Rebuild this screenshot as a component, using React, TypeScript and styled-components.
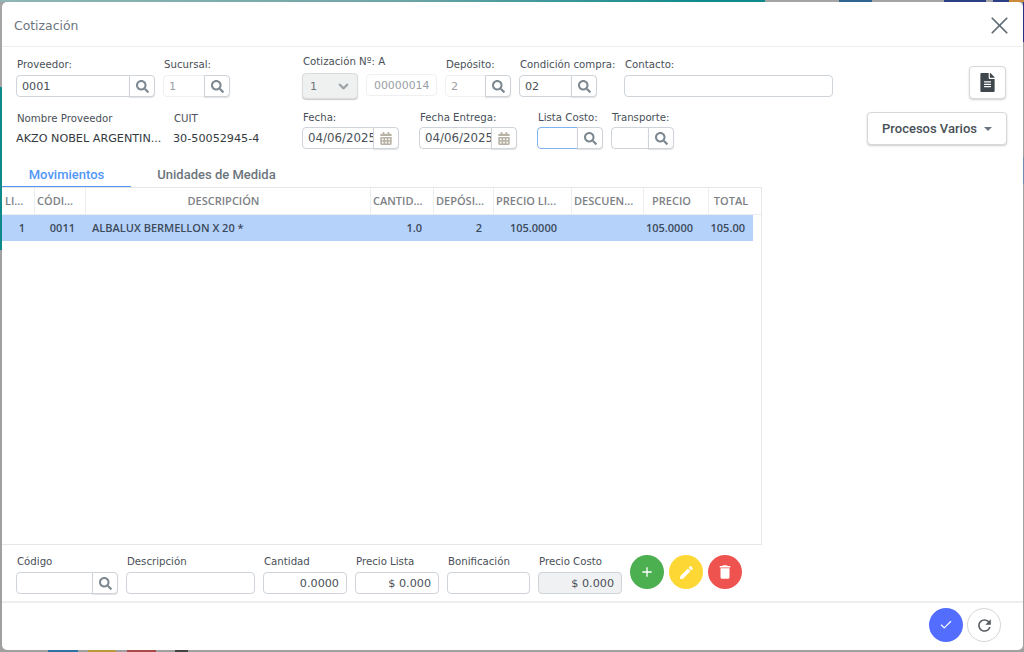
import React from 'react';
import styled, { createGlobalStyle } from 'styled-components';
import { ChevronDown, X, Check } from 'lucide-react';
import { FaSearch, FaCalendarAlt, FaFileAlt } from 'react-icons/fa';
import { MdAdd, MdEdit, MdDelete, MdRefresh } from 'react-icons/md';

const GlobalStyle = createGlobalStyle`
  html, body {
    margin: 0;
    padding: 0;
    width: 1024px;
    height: 652px;
    overflow: hidden;
    font-family: "DejaVu Sans", sans-serif;
  }
  * { box-sizing: border-box; }
`;

// the blurred page behind the dialog only shows along its edges
const Backdrop = styled.div`
  width: 1024px;
  height: 652px;
  padding: 2px 1px 2px 2px;
  background:
    linear-gradient(90deg, #8fb5b5 0, #6fa5a6 400px, #0f8a8c 700px, #0f8a8c 765px, #a5a5a5 765px, #a5a5a5 839px, #2f6690 839px, #2f6690 872px, #a5a5a5 872px, #a5a5a5 944px, #2c3f85 944px, #2c3f85 986px, #a5a5a5 986px, #a5a5a5 993px, #2c3f85 993px, #2c3f85 1009px, #c98a3a 1009px) top / 100% 2px no-repeat,
    linear-gradient(90deg, #a0a0a0 48px, #2f72a8 48px, #2f72a8 78px, #a0a0a0 78px, #a0a0a0 88px, #b89a3c 88px, #b89a3c 116px, #a0a0a0 116px, #a0a0a0 127px, #a84a48 127px, #a84a48 156px, #a0a0a0 156px, #a0a0a0 175px, #444 175px, #444 188px, #a0a0a0 188px) bottom / 100% 2px no-repeat,
    linear-gradient(180deg, #a5a5a5 87px, #0f8a8c 87px, #0f8a8c 250px, #a0a0a0 250px) left / 2px 100% no-repeat,
    linear-gradient(180deg, #2c3085 42px, #a0a0a0 42px, #a0a0a0 157px, #6f8fb0 157px, #6f8fb0 184px, #a0a0a0 184px) right / 1px 100% no-repeat,
    #a0a0a0;
`;

const Modal = styled.div`
  width: 100%;
  height: 100%;
  background: #fff;
  border-radius: 5px;
  display: flex;
  flex-direction: column;
`;

const Header = styled.div`
  height: 45px;
  flex: none;
  display: flex;
  align-items: center;
  justify-content: space-between;
  padding: 3px 9px 0 12px;
  border-bottom: 1px solid #eceeef;
`;

const Title = styled.div`
  font-size: 12.4px;
  color: #6c757d;
`;

const CloseIcon = styled(X)`
  width: 29px;
  height: 29px;
  stroke-width: 1.4;
  color: #5f6b73;
`;

const Form = styled.div`
  height: 111px;
  flex: none;
  display: flex;
  justify-content: space-between;
  padding: 0 16px 0 14px;
`;

const Rows = styled.div`
  display: flex;
  flex-direction: column;
`;

const Row = styled.div`
  display: flex;
  height: 48px;
  &:first-child { height: 63px; padding-top: 10px; }
`;

const Field = styled.div<{ $w: number; $gap?: number }>`
  width: ${(p) => p.$w}px;
  margin-left: ${(p) => p.$gap ?? 0}px;
  flex: none;
  display: flex;
  flex-direction: column;
`;

const RaisedField = styled(Field)`
  margin-top: -2px;
`;

const Label = styled.label<{ $h?: number }>`
  height: ${(p) => p.$h ?? 18}px;
  font-size: 10.2px;
  line-height: 16px;
  padding-left: 1px;
  color: #495057;
  white-space: nowrap;
`;

const RaisedLabel = styled(Label)`
  line-height: 14px;
`;

const Group = styled.div`
  display: flex;
  height: 22px;
`;

const Input = styled.div<{ $muted?: boolean; $focus?: boolean; $right?: boolean; $grey?: boolean; $joined?: boolean }>`
  flex: 1;
  min-width: 0;
  height: 22px;
  padding: 0 ${(p) => (p.$right ? 7 : 5)}px;
  border: 1px solid ${(p) => (p.$focus ? '#80b4f0' : p.$muted ? '#eef0f1' : '#ced4da')};
  border-radius: ${(p) => (p.$joined ? '4px 0 0 4px' : '4px')};
  background: ${(p) => (p.$grey ? '#f0f1f2' : '#fff')};
  font-size: 11.2px;
  line-height: 21px;
  color: ${(p) => (p.$muted ? '#9aa0a6' : '#495057')};
  text-align: ${(p) => (p.$right ? 'right' : 'left')};
  white-space: nowrap;
  overflow: hidden;
`;

const DateInput = styled(Input)`
  font-size: 11.8px;
`;

const AddonButton = styled.div`
  width: 26px;
  height: 22px;
  flex: none;
  display: flex;
  align-items: center;
  justify-content: center;
  margin-left: -1px;
  background: #fff;
  border: 1px solid #ced4da;
  border-radius: 0 4px 4px 0;
  box-shadow: 0 1px 1px rgba(0, 0, 0, 0.12);
`;

const SearchIcon = styled(FaSearch)`
  width: 13px;
  height: 13px;
  color: #7d8890;
`;

const CalendarIcon = styled(FaCalendarAlt)`
  width: 12px;
  height: 13px;
  color: #b8b2a5;
`;

const SelectBox = styled.div`
  width: 56px;
  height: 26px;
  padding: 0 6px 0 7px;
  display: flex;
  align-items: center;
  justify-content: space-between;
  background: #eff0f0;
  border: 1px solid #d9dbdc;
  border-radius: 4px;
  box-shadow: 0 1px 1px rgba(0, 0, 0, 0.2);
  font-size: 11.2px;
  color: #6c757d;
`;

const SelectArrow = styled(ChevronDown)`
  width: 15px;
  height: 15px;
  stroke-width: 3.4;
  color: #a0a5a9;
`;

const NumberBox = styled(Input)`
  flex: none;
  width: 71px;
  margin-left: 8px;
  margin-top: 1px;
  padding: 0 7px;
  font-size: 10.9px;
`;

const NameLabel = styled.div`
  height: 16px;
  padding-top: 2px;
  padding-left: 1px;
  font-size: 10.2px;
  line-height: 14px;
  color: #495057;
  white-space: nowrap;
`;

const NameValue = styled.div`
  margin-top: 5px;
  font-size: 11.2px;
  line-height: 16px;
  color: #343a40;
  white-space: nowrap;
`;

const Side = styled.div`
  display: flex;
  flex-direction: column;
  align-items: flex-end;
  padding-top: 19px;
`;

const DocButton = styled.div`
  width: 37px;
  height: 33px;
  margin-right: 1px;
  display: flex;
  align-items: center;
  justify-content: center;
  background: #fff;
  border: 1px solid #d6d8da;
  border-radius: 4px;
  box-shadow: 0 1px 2px rgba(0, 0, 0, 0.18);
  color: #3f464c;
`;

const Dropdown = styled.div`
  width: 140px;
  height: 33px;
  margin-top: 13px;
  display: flex;
  align-items: center;
  justify-content: center;
  gap: 7px;
  background: #fff;
  border: 1px solid #d6d8da;
  border-radius: 4px;
  box-shadow: 0 1px 2px rgba(0, 0, 0, 0.2);
  font-family: Roboto, sans-serif;
  font-weight: 500;
  font-size: 13px;
  color: #495057;
`;

const Caret = styled.span`
  width: 0;
  height: 0;
  border-left: 4px solid transparent;
  border-right: 4px solid transparent;
  border-top: 4px solid #6c757d;
`;

const Tabs = styled.div`
  height: 30px;
  flex: none;
  display: flex;
`;

const Tab = styled.div<{ $active?: boolean }>`
  width: ${(p) => (p.$active ? 129 : 171)}px;
  height: 30px;
  padding-top: 9px;
  text-align: center;
  font-family: Roboto, sans-serif;
  font-weight: 500;
  font-size: 13px;
  line-height: 16px;
  color: ${(p) => (p.$active ? '#5297f7' : '#6c757d')};
  border-bottom: 2px solid ${(p) => (p.$active ? '#5297f7' : 'transparent')};
`;

const Table = styled.div`
  width: 760px;
  height: 358px;
  flex: none;
  margin-top: -1px;
  border: 1px solid #e4e6e8;
  border-left: none;
  font-family: "Open Sans", sans-serif;
  font-size: 11px;
`;

const HeadRow = styled.div`
  display: flex;
  height: 27px;
  border-bottom: 1px solid #eceeef;
`;

const HeadCell = styled.div<{ $w: number; $center?: boolean; $end?: number }>`
  width: ${(p) => p.$w}px;
  flex: none;
  padding: 0 ${(p) => p.$end ?? 2}px 0 2px;
  line-height: 26px;
  font-weight: 600;
  color: #7d8185;
  text-align: ${(p) => (p.$center ? 'center' : 'left')};
  white-space: nowrap;
  border-right: 1px solid #eceeef;
  &:first-child { padding-left: 3px; }
  &:last-child { border-right: none; }
`;

const BodyRow = styled.div`
  display: flex;
  width: 751px;
  height: 26px;
  background: #b5d2fa;
`;

const BodyCell = styled.div<{ $w: number; $left?: boolean; $pad?: number }>`
  width: ${(p) => p.$w}px;
  flex: none;
  padding: ${(p) => (p.$left ? `0 0 0 ${p.$pad ?? 3}px` : `0 ${p.$pad ?? 3}px 0 0`)};
  line-height: 26px;
  font-weight: 600;
  color: #3c4a5c;
  text-align: ${(p) => (p.$left ? 'left' : 'right')};
  white-space: nowrap;
`;

const EntryBar = styled.div`
  height: 58px;
  flex: none;
  display: flex;
  padding: 9px 0 0 14px;
  border-bottom: 2px solid #eceeef;
`;

const EntryField = styled(Field)`
  margin-right: 8px;
`;

const RoundButtons = styled.div`
  display: flex;
  gap: 5px;
  height: 34px;
  margin-top: 1px;
`;

const Round = styled.div<{ $bg: string; $outline?: boolean }>`
  width: 34px;
  height: 34px;
  border-radius: 50%;
  display: flex;
  align-items: center;
  justify-content: center;
  background: ${(p) => p.$bg};
  color: ${(p) => (p.$outline ? '#555b60' : '#fff')};
  border: ${(p) => (p.$outline ? '1px solid #d5d7d8' : 'none')};
`;

const Footer = styled.div`
  flex: 1;
  display: flex;
  justify-content: flex-end;
  align-items: flex-start;
  gap: 4px;
  padding: 5px 22px 0 0;
`;

const search = (
  <AddonButton>
    <SearchIcon />
  </AddonButton>
);

const calendar = (
  <AddonButton>
    <CalendarIcon />
  </AddonButton>
);

const columns = [
  { w: 33, name: 'LI...' },
  { w: 51, name: 'CÓDI...' },
  { w: 285, name: 'DESCRIPCIÓN', center: true, end: 11 },
  { w: 63, name: 'CANTID...' },
  { w: 60, name: 'DEPÓSI...' },
  { w: 78, name: 'PRECIO LI...' },
  { w: 72, name: 'DESCUEN...' },
  { w: 65, name: 'PRECIO', center: true, end: 11 },
  { w: 44, name: 'TOTAL', center: true },
];

export default function App() {
  return (
    <Backdrop>
      <GlobalStyle />
      <Modal>
        <Header>
          <Title>Cotización</Title>
          <CloseIcon />
        </Header>
        <Form>
          <Rows>
            <Row>
              <Field $w={139}>
                <Label>Proveedor:</Label>
                <Group>
                  <Input $joined>0001</Input>
                  {search}
                </Group>
              </Field>
              <Field $w={67} $gap={8}>
                <Label>Sucursal:</Label>
                <Group>
                  <Input $muted $joined>1</Input>
                  {search}
                </Group>
              </Field>
              <RaisedField $w={135} $gap={72}>
                <RaisedLabel>Cotización Nº: A</RaisedLabel>
                <Group>
                  <SelectBox>
                    1
                    <SelectArrow />
                  </SelectBox>
                  <NumberBox $muted>00000014</NumberBox>
                </Group>
              </RaisedField>
              <Field $w={66} $gap={8}>
                <Label>Depósito:</Label>
                <Group>
                  <Input $muted $joined>2</Input>
                  {search}
                </Group>
              </Field>
              <Field $w={78} $gap={8}>
                <Label>Condición compra:</Label>
                <Group>
                  <Input $joined>02</Input>
                  {search}
                </Group>
              </Field>
              <Field $w={209} $gap={27}>
                <Label>Contacto:</Label>
                <Group>
                  <Input />
                </Group>
              </Field>
            </Row>
            <Row>
              <Field $w={157}>
                <NameLabel>Nombre Proveedor</NameLabel>
                <NameValue>AKZO NOBEL ARGENTIN...</NameValue>
              </Field>
              <Field $w={120}>
                <NameLabel>CUIT</NameLabel>
                <NameValue>30-50052945-4</NameValue>
              </Field>
              <Field $w={97} $gap={9}>
                <Label $h={17}>Fecha:</Label>
                <Group>
                  <DateInput $joined>04/06/2025</DateInput>
                  {calendar}
                </Group>
              </Field>
              <Field $w={98} $gap={20}>
                <Label $h={17}>Fecha Entrega:</Label>
                <Group>
                  <DateInput $joined>04/06/2025</DateInput>
                  {calendar}
                </Group>
              </Field>
              <Field $w={66} $gap={20}>
                <Label $h={17}>Lista Costo:</Label>
                <Group>
                  <Input $focus $joined />
                  {search}
                </Group>
              </Field>
              <Field $w={63} $gap={8}>
                <Label $h={17}>Transporte:</Label>
                <Group>
                  <Input $joined />
                  {search}
                </Group>
              </Field>
            </Row>
          </Rows>
          <Side>
            <DocButton>
              <FaFileAlt size={19} />
            </DocButton>
            <Dropdown>
              Procesos Varios
              <Caret />
            </Dropdown>
          </Side>
        </Form>
        <Tabs>
          <Tab $active>Movimientos</Tab>
          <Tab>Unidades de Medida</Tab>
        </Tabs>
        <Table>
          <HeadRow>
            {columns.map((c) => (
              <HeadCell key={c.name} $w={c.w} $center={c.center} $end={c.end}>
                {c.name}
              </HeadCell>
            ))}
          </HeadRow>
          <BodyRow>
            <BodyCell $w={33} $pad={10}>1</BodyCell>
            <BodyCell $w={51} $pad={11}>0011</BodyCell>
            <BodyCell $w={285} $left $pad={6}>ALBALUX BERMELLON X 20 *</BodyCell>
            <BodyCell $w={63} $pad={12}>1.0</BodyCell>
            <BodyCell $w={60} $pad={12}>2</BodyCell>
            <BodyCell $w={78} $pad={15}>105.0000</BodyCell>
            <BodyCell $w={72} />
            <BodyCell $w={65} $pad={16}>105.0000</BodyCell>
            <BodyCell $w={44} $pad={8}>105.00</BodyCell>
          </BodyRow>
        </Table>
        <EntryBar>
          <EntryField $w={102}>
            <Label>Código</Label>
            <Group>
              <Input $joined />
              {search}
            </Group>
          </EntryField>
          <EntryField $w={129}>
            <Label>Descripción</Label>
            <Group>
              <Input />
            </Group>
          </EntryField>
          <EntryField $w={84}>
            <Label>Cantidad</Label>
            <Group>
              <Input $right>0.0000</Input>
            </Group>
          </EntryField>
          <EntryField $w={84}>
            <Label>Precio Lista</Label>
            <Group>
              <Input $right>$ 0.000</Input>
            </Group>
          </EntryField>
          <EntryField $w={83}>
            <Label>Bonificación</Label>
            <Group>
              <Input />
            </Group>
          </EntryField>
          <EntryField $w={84}>
            <Label>Precio Costo</Label>
            <Group>
              <Input $right $grey>$ 0.000</Input>
            </Group>
          </EntryField>
          <RoundButtons>
            <Round $bg="#4caf50"><MdAdd size={16} /></Round>
            <Round $bg="#fdd835"><MdEdit size={17} /></Round>
            <Round $bg="#ef5350"><MdDelete size={18} /></Round>
          </RoundButtons>
        </EntryBar>
        <Footer>
          <Round $bg="#536dfe"><Check size={14} /></Round>
          <Round $bg="#fff" $outline><MdRefresh size={19} /></Round>
        </Footer>
      </Modal>
    </Backdrop>
  );
}
